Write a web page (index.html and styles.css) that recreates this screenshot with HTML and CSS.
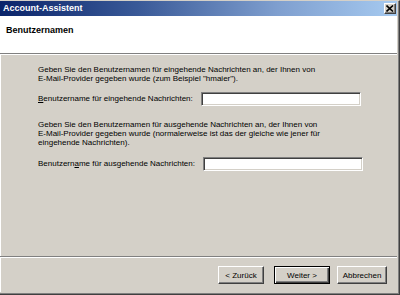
FILE: index.html
```html
<!DOCTYPE html>
<html lang="de">
<head>
<meta charset="utf-8">
<title>Account-Assistent</title>
<link rel="stylesheet" href="styles.css">
</head>
<body>
<div class="window">
  <div class="titlebar">
    <span class="title">Account-Assistent</span>
    <span class="close"><svg width="8" height="7" viewBox="0 0 8 7"><path d="M0.5 0.5 L7 6.5 M7 0.5 L0.5 6.5" stroke="#000" stroke-width="1.6" fill="none"/></svg></span>
  </div>
  <div class="header">Benutzernamen</div>
  <div class="sep"></div>
  <div class="content">
    <p class="para p1">Geben Sie den Benutzernamen für eingehende Nachrichten an, der Ihnen von<br>E-Mail-Provider gegeben wurde (zum Beispiel "hmaier").</p>
    <div class="row r1">
      <label class="lbl"><u>B</u>enutzername für eingehende Nachrichten:</label>
      <span class="input"></span>
    </div>
    <p class="para p2">Geben Sie den Benutzernamen für ausgehende Nachrichten an, der Ihnen von<br>E-Mail-Provider gegeben wurde (normalerweise ist das der gleiche wie jener für<br>eingehende Nachrichten).</p>
    <div class="row r2">
      <label class="lbl">Benutzern<u>a</u>me für ausgehende Nachrichten:</label>
      <span class="input"></span>
    </div>
  </div>
  <div class="sep"></div>
  <div class="footer">
    <span class="btn b-back">&lt; Zurück</span>
    <span class="btn b-next">Weiter &gt;</span>
    <span class="btn b-cancel">Abbrechen</span>
  </div>
</div>
</body>
</html>
```
FILE: styles.css
```css
html, body {
  margin: 0;
  padding: 0;
  background: #d4d0c8;
}
body {
  font-family: "Liberation Sans", Arial, sans-serif;
  font-size: 8px;
  color: #000;
}
.window {
  box-sizing: border-box;
  width: 400px;
  height: 295px;
  display: flex;
  flex-direction: column;
  background: #d4d0c8;
  border-top: 1px solid #d4d0c8;
  border-right: 1px solid #404040;
  border-bottom: 1px solid #404040;
  box-shadow: inset -1px -1px 0 #808080;
  padding: 0 2px 2px 0;
}
.titlebar {
  height: 15px;
  flex: none;
  display: flex;
  align-items: flex-start;
  justify-content: space-between;
  background: linear-gradient(to right, #0a246a 0%, #3a5a98 35%, #7f9fcf 70%, #a6caf0 100%);
}
.title {
  color: #fff;
  font-weight: bold;
  font-size: 9px;
  line-height: 15px;
  padding-left: 3px;
}
.close {
  box-sizing: border-box;
  width: 12px;
  height: 11px;
  margin: 2px 1px 0 0;
  background: #d4d0c8;
  border: 1px solid;
  border-color: #fff #404040 #404040 #fff;
  box-shadow: inset -1px -1px 0 #808080;
  display: flex;
  align-items: center;
  justify-content: center;
}
.close svg { display: block; }
.header {
  height: 37px;
  flex: none;
  box-sizing: border-box;
  background: #fff;
  font-weight: bold;
  font-size: 9px;
  line-height: 11px;
  padding: 9px 0 0 6px;
}
.sep {
  flex: none;
  height: 0;
  border-top: 1px solid #808080;
  border-bottom: 1px solid #fff;
}
.content {
  flex: 1;
  border-left: 1px solid #fff;
  padding: 10px 0 0 37px;
}
.para {
  margin: 0;
  line-height: 9.25px;
}
.row {
  display: flex;
  align-items: center;
  gap: 8px;
}
.r1 { margin-top: 8px; }
.p2 { margin-top: 14px; }
.r2 { margin-top: 10px; }
.lbl {
  line-height: 10px;
}
.input {
  box-sizing: border-box;
  width: 160px;
  height: 14px;
  background: #fff;
  border: 1px solid;
  border-color: #808080 #fff #fff #808080;
  box-shadow: inset 1px 1px 0 #404040, inset -1px -1px 0 #d4d0c8;
}
.footer {
  flex: none;
  display: flex;
  justify-content: flex-end;
  align-items: flex-start;
  height: 34px;
  box-sizing: border-box;
  padding: 8px 10px 0 0;
  border-left: 1px solid #fff;
}
.btn {
  box-sizing: border-box;
  height: 18px;
  display: flex;
  align-items: center;
  justify-content: center;
  background: #d4d0c8;
  border: 1px solid;
  border-color: #fff #404040 #404040 #fff;
  box-shadow: inset -1px -1px 0 #808080;
}
.b-back { width: 46px; }
.b-next {
  width: 56px;
  margin-left: 10px;
  border-color: #000;
  box-shadow: inset 1px 1px 0 #fff, inset -1px -1px 0 #404040, inset -2px -2px 0 #808080;
}
.b-cancel { width: 50px; margin-left: 7px; }
```
